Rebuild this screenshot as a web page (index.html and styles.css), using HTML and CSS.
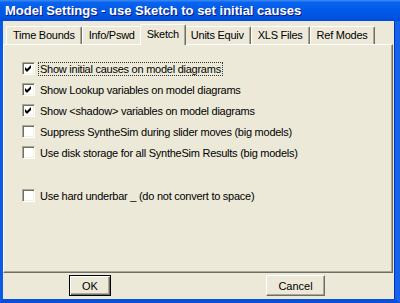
FILE: index.html
```html
<!DOCTYPE html>
<html>
<head>
  <meta charset="UTF-8">
  <title>Model Settings</title>
  <link rel="stylesheet" href="styles.css">
</head>
<body>
  <div id="window">
    <!-- Title bar -->
    <div class="titlebar">Model Settings - use Sketch to set initial causes</div>

    <div class="frame">
      <!-- Tab strip -->
      <div class="tabs">
        <div class="tab">Time Bounds</div>
        <div class="tab">Info/Pswd</div>
        <div class="tab selected">Sketch</div>
        <div class="tab">Units Equiv</div>
        <div class="tab">XLS Files</div>
        <div class="tab">Ref Modes</div>
      </div>

      <!-- Sketch page -->
      <div class="panel">
        <div class="row">
          <span class="check on"><svg viewBox="0 0 11 11"><path d="M2 4 L4 6 L8 2 L8 5 L4 9 L2 7 Z"/></svg></span>
          <span class="label focus">Show initial causes on model diagrams</span>
        </div>
        <div class="row">
          <span class="check on"><svg viewBox="0 0 11 11"><path d="M2 4 L4 6 L8 2 L8 5 L4 9 L2 7 Z"/></svg></span>
          <span class="label">Show Lookup variables on model diagrams</span>
        </div>
        <div class="row">
          <span class="check on"><svg viewBox="0 0 11 11"><path d="M2 4 L4 6 L8 2 L8 5 L4 9 L2 7 Z"/></svg></span>
          <span class="label">Show &lt;shadow&gt; variables on model diagrams</span>
        </div>
        <div class="row">
          <span class="check"></span>
          <span class="label">Suppress SyntheSim during slider moves (big models)</span>
        </div>
        <div class="row">
          <span class="check"></span>
          <span class="label">Use disk storage for all SyntheSim Results (big models)</span>
        </div>
        <div class="spacer"></div>
        <div class="row">
          <span class="check"></span>
          <span class="label">Use hard underbar _ (do not convert to space)</span>
        </div>
      </div>

      <!-- Dialog buttons -->
      <div class="buttons">
        <button class="btn default ok">OK</button>
        <button class="btn cancel">Cancel</button>
      </div>
    </div>
  </div>
</body>
</html>
```

FILE: styles.css
```css
/* Whole page is the dialog window */
body {
  margin: 0;
  background: #ece9d8;
  font-family: "Liberation Sans", Arial, sans-serif;
  font-size: 11px;
  letter-spacing: -0.25px;
  color: black;
}
#window {
  width: 400px;
  height: 303px;
  display: flex;
  flex-direction: column;
  overflow: hidden;
}
/* XP style blue caption */
.titlebar {
  height: 21px;
  flex: none;
  box-sizing: border-box;
  padding: 3px 0 0 5px;
  color: white;
  font-weight: bold;
  font-size: 13px;
  letter-spacing: 0;
  text-shadow: 1px 1px #0a1a7a;
  white-space: nowrap;
  background: linear-gradient(to bottom, #3a8cf6 0%, #0a63ec 12%, #005be9 45%, #0055e3 75%, #004bd8 100%);
}
/* Blue window border around the client area */
.frame {
  flex: 1;
  display: flex;
  flex-direction: column;
  border-left: 3px solid #0a5ae6;
  border-right: 5px solid #1663ea;
  border-bottom: 4px solid #0a4fd8;
  box-shadow: inset -1px 0 #0035b8;
}
/* Tab strip */
.tabs {
  display: flex;
  align-items: flex-end;
  height: 23px;
  padding-left: 3px;
}
.tab {
  height: 18px;
  box-sizing: border-box;
  padding: 2px 6px 0;
  border-top: 1px solid white;
  border-left: 1px solid white;
  border-right: 1px solid #716f64;
  box-shadow: inset -1px 0 #aca899;
  border-radius: 2px 2px 0 0;
  white-space: nowrap;
  text-align: center;
}
.tab.selected {
  height: 21px;
  margin: 0 -2px -1px;
  padding-top: 3px;
  position: relative;
  z-index: 1;
  background: #ece9d8;
}
/* Page body with 3D edge */
.panel {
  height: 229px;
  box-sizing: border-box;
  margin-right: 2px;
  padding: 13px 0 0 18px;
  border-top: 1px solid white;
  border-left: 1px solid white;
  border-right: 1px solid #716f64;
  border-bottom: 1px solid #716f64;
  box-shadow: inset -1px -1px #aca899;
}
.row {
  display: flex;
  align-items: center;
  height: 21px;
}
.spacer {
  height: 22px;
}
/* Sunken check box */
.check {
  width: 13px;
  height: 13px;
  box-sizing: border-box;
  flex: none;
  background: white;
  border-top: 1px solid #aca899;
  border-left: 1px solid #aca899;
  border-right: 1px solid white;
  border-bottom: 1px solid white;
  box-shadow: inset 1px 1px #716f64, inset -1px -1px #f1efe2;
}
.check svg {
  display: block;
  width: 11px;
  height: 11px;
}
.check path {
  fill: black;
}
.label {
  margin-left: 3px;
  padding: 0 1px;
  border: 1px solid transparent;
  white-space: nowrap;
}
.label.focus {
  border: 1px dotted #333;
}
/* OK / Cancel */
.buttons {
  display: flex;
  padding-top: 2px;
}
.btn {
  height: 21px;
  box-sizing: border-box;
  padding: 0;
  font-family: "Liberation Sans", Arial, sans-serif;
  font-size: 11px;
  color: black;
  background: #ece9d8;
  border-top: 1px solid white;
  border-left: 1px solid white;
  border-right: 1px solid #716f64;
  border-bottom: 1px solid #716f64;
  box-shadow: inset -1px -1px #aca899;
}
.btn.default {
  border: 1px solid black;
  box-shadow: inset 1px 1px white, inset -1px -1px #716f64, inset -2px -2px #aca899;
}
.ok {
  width: 42px;
  margin-left: 66px;
}
.cancel {
  width: 59px;
  margin-left: 155px;
}
```
